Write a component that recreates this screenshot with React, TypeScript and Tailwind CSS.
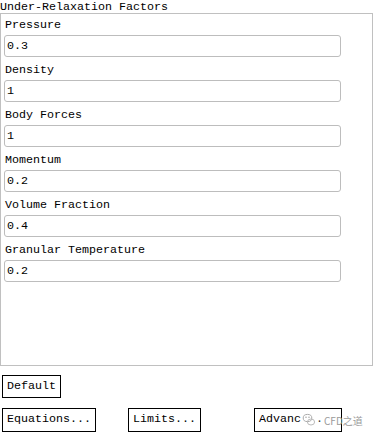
import React from "react";

const fields: [string, string][] = [
  ["Pressure", "0.3"],
  ["Density", "1"],
  ["Body Forces", "1"],
  ["Momentum", "0.2"],
  ["Volume Fraction", "0.4"],
  ["Granular Temperature", "0.2"],
];

export default function App() {
  return (
    <div
      className="relative w-[374px] h-[438px] bg-white text-black text-[11.67px] overflow-hidden"
      style={{ fontFamily: '"Liberation Mono", "Noto Sans CJK SC", monospace' }}
    >
      <div className="h-[13px] leading-[14px] whitespace-pre">Under-Relaxation Factors</div>
      <div className="w-[373px] h-[353px] border border-[#c0c0c0] pl-[3px] flex flex-col gap-[2px]">
        {fields.map(([label, value]) => (
          <div key={label} className="flex flex-col">
            <div className="h-[21px] leading-[22px] pl-[1px] whitespace-pre">{label}</div>
            <div className="w-[337px] h-[22px] border border-[#bdbdbd] rounded-[3px] leading-[20px] pl-[2px] whitespace-pre">
              {value}
            </div>
          </div>
        ))}
      </div>
      <div className="pl-[2px] pt-[9px]">
        <div className="inline-flex h-[23px] items-center border border-black px-[4px] whitespace-pre">
          Default
        </div>
      </div>
      <div className="pl-[2px] pt-[10px] grid grid-cols-[126px_126px_126px]">
        <div>
          <div className="inline-flex h-[24px] items-center border border-black px-[4px] whitespace-pre">
            Equations...
          </div>
        </div>
        <div>
          <div className="inline-flex h-[24px] items-center border border-black px-[4px] whitespace-pre">
            Limits...
          </div>
        </div>
        <div>
          <div className="flex w-[88px] h-[24px] items-center border border-black pl-[4px] whitespace-nowrap overflow-visible">
            <span>Advanc</span>
            <svg width="14" height="14" viewBox="0 0 14 14" className="shrink-0 ml-[1px]">
              <ellipse cx="5.5" cy="5" rx="4.3" ry="3.6" fill="none" stroke="#aaa" strokeWidth="1" />
              <ellipse cx="9" cy="9" rx="3.6" ry="3" fill="none" stroke="#bbb" strokeWidth="1" />
              <circle cx="4" cy="4.3" r="0.7" fill="#999" />
              <circle cx="7" cy="4.3" r="0.7" fill="#999" />
            </svg>
            <span className="shrink-0 text-[#333]">.</span>
            <span
              className="shrink-0 text-[#9a9a9a] text-[10px] ml-[1px]"
              style={{ fontFamily: '"Noto Sans CJK SC", sans-serif' }}
            >
              CFD之道
            </span>
          </div>
        </div>
      </div>
    </div>
  );
}
